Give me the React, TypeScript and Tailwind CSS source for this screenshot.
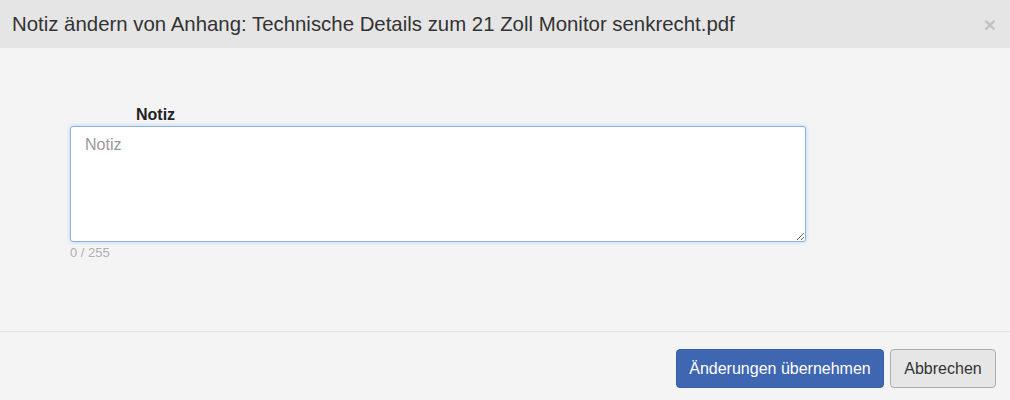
import React from "react";

export default function App() {
  return (
    <div className="w-[1010px] h-[400px] flex flex-col bg-[#f4f4f4] font-['Liberation_Sans',Arial,sans-serif] text-[#333]">
      {/* Header */}
      <div className="h-[48px] shrink-0 flex items-center justify-between bg-[#e5e5e5] pl-[12px] pr-[14px]">
        <h4 className="text-[20.4px] leading-none">
          Notiz ändern von Anhang: Technische Details zum 21 Zoll Monitor senkrecht.pdf
        </h4>
        <button className="text-[21px] font-bold leading-none text-[#c2c2c2]">×</button>
      </div>

      {/* Body */}
      <div className="flex-1 pt-[55px]">
        <div className="pl-[136px] h-[23px] text-[16px] font-bold text-[#222] leading-[23px]">Notiz</div>
        <div className="pl-[70px]">
          <textarea
            placeholder="Notiz"
            className="block w-[736px] h-[116px] resize-y rounded-[3px] border border-[#8fb2d8] bg-white px-[14px] py-[8px] text-[16px] leading-[20px] shadow-[0_0_4px_rgba(102,175,233,0.45)] outline-none placeholder:text-[#999]"
          />
        </div>
        <div className="pl-[70px] mt-[2px] text-[13px] leading-[17px] text-[#b0b0b0]">0 / 255</div>
      </div>

      {/* Footer */}
      <div className="h-[69px] shrink-0 border-t border-[#e3e3e3] flex items-start justify-end gap-[6px] pt-[17px] pr-[14px]">
        <button className="h-[39px] w-[208px] rounded-[4px] bg-[#3f66b0] border border-[#3a5ea3] text-white text-[16px]">
          Änderungen übernehmen
        </button>
        <button className="h-[39px] w-[106px] rounded-[4px] bg-[#e6e6e6] border border-[#adadad] text-[#333] text-[16px]">
          Abbrechen
        </button>
      </div>
    </div>
  );
}
